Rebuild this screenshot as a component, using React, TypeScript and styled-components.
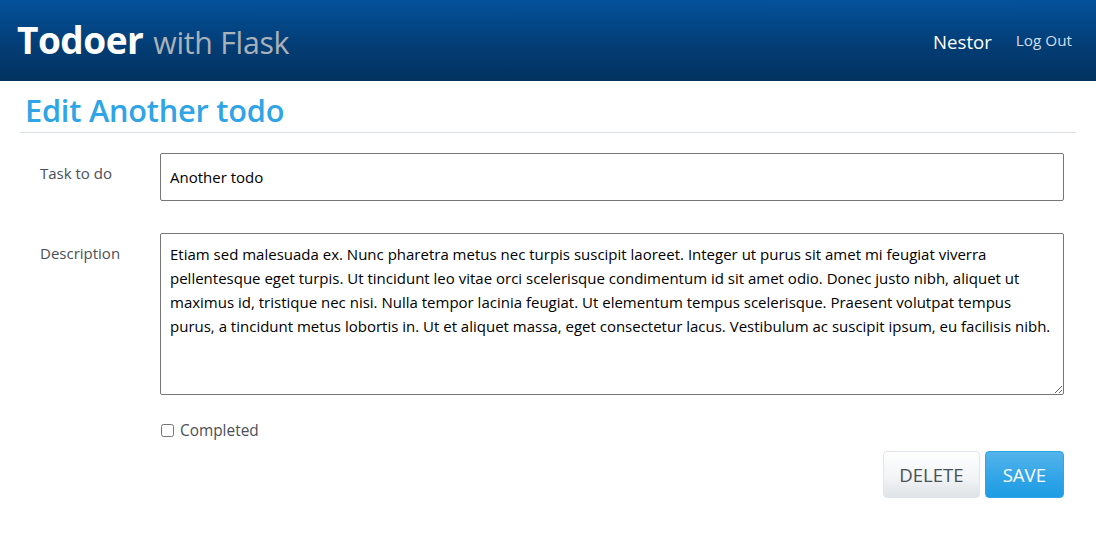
import React from "react";
import styled, { createGlobalStyle } from "styled-components";

const Global = createGlobalStyle`
  html, body { margin: 0; padding: 0; background: #fff; }
  body { font-family: "Open Sans", "Noto Sans", sans-serif; color: #495057; }
  * { box-sizing: border-box; }
`;

const Navbar = styled.nav`
  height: 81px;
  background: linear-gradient(#04519b, #033c73 60%, #02325f);
  display: flex;
  align-items: center;
  justify-content: space-between;
  padding: 0 24px 0 17px;
`;

const Brand = styled.div`
  display: flex;
  align-items: baseline;
  gap: 10px;
  color: #fff;
  font-weight: 700;
  font-size: 37px;
  letter-spacing: -0.5px;
  margin-top: -2px;
`;

const BrandSub = styled.span`
  color: #a9b1b9;
  font-weight: 400;
  font-size: 30.3px;
  letter-spacing: -0.3px;
`;

const NavLinks = styled.div`
  display: flex;
  align-items: center;
  gap: 24px;
`;

const NavLink = styled.a<{ $main?: boolean }>`
  color: ${(p) => (p.$main ? "#ffffff" : "#d2dcea")};
  font-size: ${(p) => (p.$main ? "18.6px" : "15.3px")};
  text-decoration: none;
  margin-top: ${(p) => (p.$main ? "1px" : "-2px")};
`;

const Main = styled.main`
  padding: 0 20px;
`;

const Heading = styled.h1`
  margin: 0;
  padding: 10px 5px 0;
  height: 52px;
  border-bottom: 1px solid #dee2e6;
  color: #2fa4e7;
  font-size: 30.7px;
  font-weight: 600;
  line-height: 38px;
  letter-spacing: -0.2px;
`;

const Form = styled.form`
  padding-top: 20px;
  display: flex;
  flex-direction: column;
`;

const Row = styled.div<{ $gap?: number }>`
  display: grid;
  grid-template-columns: 140px 904px;
  margin-bottom: ${(p) => p.$gap ?? 0}px;
`;

const Label = styled.label`
  padding: 10px 0 0 20px;
  font-size: 15px;
  color: #495057;
`;

const TextInput = styled.input`
  height: 48px;
  width: 100%;
  border: 1px solid #767676;
  border-radius: 2px;
  padding: 0 9px;
  font-family: "Open Sans", sans-serif;
  font-size: 15px;
  color: #000;
  outline: none;
`;

const TextArea = styled.textarea`
  height: 162px;
  width: 100%;
  border: 1px solid #767676;
  border-radius: 2px;
  padding: 8px 6px 8px 9px;
  font-family: "Open Sans", sans-serif;
  font-size: 15px;
  line-height: 24px;
  color: #000;
  resize: vertical;
  outline: none;
`;

const CheckRow = styled.label`
  display: flex;
  align-items: center;
  gap: 6px;
  font-size: 15.4px;
  color: #495057;
  grid-column: 2;
`;

const Check = styled.input`
  margin: 0 0 0 1px;
  width: 13px;
  height: 13px;
`;

const Actions = styled.div`
  display: flex;
  justify-content: flex-end;
  gap: 5px;
  width: 1044px;
  margin-top: 10px;
`;

const Button = styled.button<{ $primary?: boolean }>`
  height: 47px;
  padding: ${(p) => (p.$primary ? "0 17px" : "0 15px")};
  border-radius: 4px;
  font-family: "Open Sans", sans-serif;
  font-size: 18.6px;
  text-transform: uppercase;
  cursor: pointer;
  border: 1px solid ${(p) => (p.$primary ? "#2fa4e7" : "#e3e6e9")};
  color: ${(p) => (p.$primary ? "#fff" : "#495057")};
  background: ${(p) =>
    p.$primary
      ? "linear-gradient(#54b4eb, #2fa4e7 60%, #1d9ce5)"
      : "linear-gradient(#ffffff, #f1f3f5 60%, #dfe3e7)"};
`;

const description =
  "Etiam sed malesuada ex. Nunc pharetra metus nec turpis suscipit laoreet. Integer ut purus sit amet mi feugiat viverra pellentesque eget turpis. Ut tincidunt leo vitae orci scelerisque condimentum id sit amet odio. Donec justo nibh, aliquet ut maximus id, tristique nec nisi. Nulla tempor lacinia feugiat. Ut elementum tempus scelerisque. Praesent volutpat tempus purus, a tincidunt metus lobortis in. Ut et aliquet massa, eget consectetur lacus. Vestibulum ac suscipit ipsum, eu facilisis nibh.";

export default function App() {
  return (
    <>
      <Global />
      <Navbar>
        <Brand>
          Todoer <BrandSub>with Flask</BrandSub>
        </Brand>
        <NavLinks>
          <NavLink $main href="#">Nestor</NavLink>
          <NavLink href="#">Log Out</NavLink>
        </NavLinks>
      </Navbar>
      <Main>
        <Heading>Edit Another todo</Heading>
        <Form onSubmit={(e) => e.preventDefault()}>
          <Row $gap={32}>
            <Label htmlFor="task">Task to do</Label>
            <TextInput id="task" defaultValue="Another todo" />
          </Row>
          <Row $gap={25}>
            <Label htmlFor="desc">Description</Label>
            <TextArea id="desc" defaultValue={description} />
          </Row>
          <Row>
            <CheckRow>
              <Check type="checkbox" />
              Completed
            </CheckRow>
          </Row>
          <Actions>
            <Button type="button">Delete</Button>
            <Button $primary type="submit">Save</Button>
          </Actions>
        </Form>
      </Main>
    </>
  );
}
